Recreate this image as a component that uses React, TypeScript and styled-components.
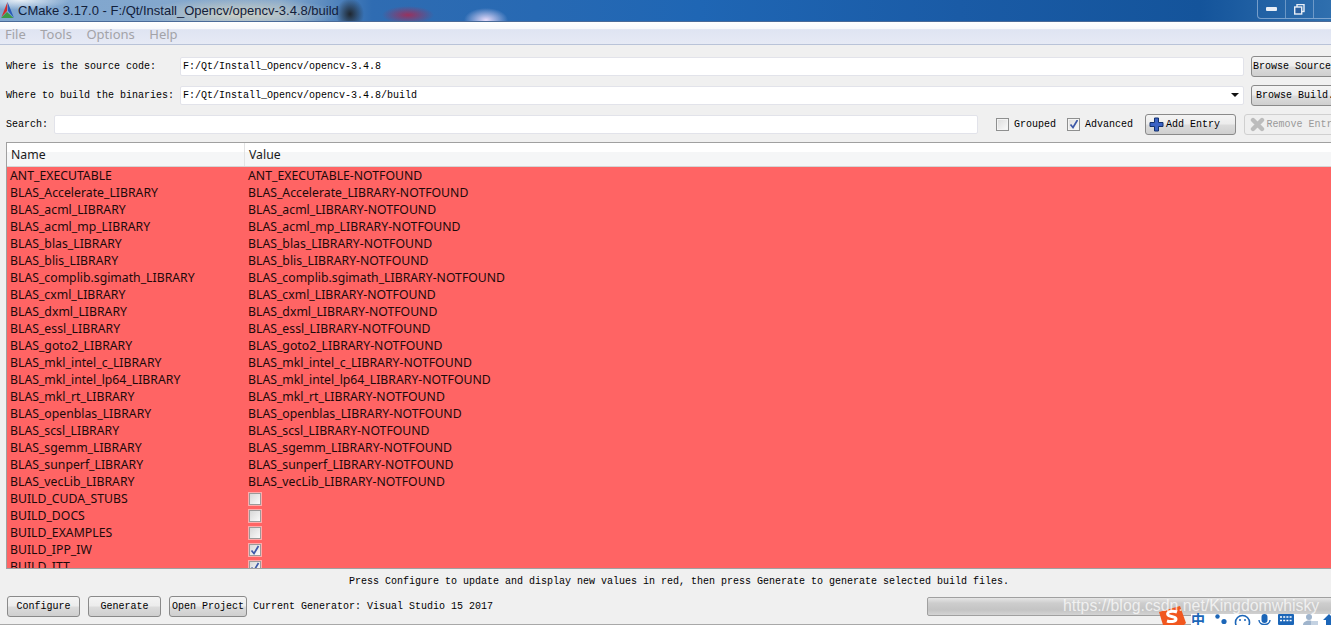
import React from "react";
import styled, { createGlobalStyle } from "styled-components";

const GlobalStyle = createGlobalStyle`
  html, body {
    margin: 0;
    padding: 0;
    width: 1331px;
    height: 625px;
    overflow: hidden;
    background: #f0f0f0;
  }
  svg {
    display: block;
    flex: none;
  }
`;

const Clip = styled.div`
  position: relative;
  width: 1331px;
  height: 625px;
  overflow: hidden;
`;

const Win = styled.div`
  display: flex;
  flex-direction: column;
  width: 1358px;
  height: 625px;
  background: #f0f0f0;
  font-family: "Liberation Mono", "DejaVu Sans Mono", monospace;
  font-size: 10px;
  color: #000;
  border-bottom: 1px solid #a8a8a8;
  box-sizing: border-box;
`;

const TitleBar = styled.div`
  position: relative;
  display: flex;
  align-items: center;
  gap: 4px;
  height: 21px;
  flex: none;
  padding-left: 1px;
  font-family: "Liberation Sans", Arial, sans-serif;
  font-size: 13px;
  color: #12203a;
  border-bottom: 1px solid #4a6a98;
  background:
    radial-gradient(ellipse 22px 12px at 486px 20px, rgba(240, 225, 255, 0.95), transparent),
    radial-gradient(ellipse 26px 9px at 408px 15px, rgba(170, 40, 80, 0.85), transparent),
    radial-gradient(ellipse 14px 16px at 350px 14px, rgba(25, 25, 25, 0.85), transparent),
    radial-gradient(ellipse 100px 16px at 240px 14px, rgba(225, 220, 195, 0.8), transparent),
    radial-gradient(ellipse 50px 10px at 20px 0, rgba(245, 248, 250, 0.9), transparent),
    linear-gradient(90deg, #7fa6cf 0, #86a8cc 280px, #2f6cb2 372px, #1f66b4 700px, #1a5ba6 960px, #14549b 1200px, #2f6fae 1331px);
`;

const WinControls = styled.div`
  position: absolute;
  top: 0;
  left: 1257px;
  display: flex;
  height: 18px;
  border: 1px solid rgba(190, 210, 235, 0.55);
  border-top: 0;
  border-radius: 0 0 4px 4px;
`;

const WinBtn = styled.div`
  display: flex;
  align-items: center;
  justify-content: center;
  width: ${(p: { $w: number }) => p.$w}px;
  border-right: 1px solid rgba(190, 210, 235, 0.45);
`;

const MenuBar = styled.div`
  display: flex;
  gap: 14.5px;
  height: 23px;
  flex: none;
  align-items: flex-end;
  padding: 0 0 1px 5px;
  box-sizing: border-box;
  font-family: "Noto Sans", "Liberation Sans", sans-serif;
  font-size: 13px;
  line-height: 18px;
  color: #a3a3a8;
  border-bottom: 1px solid #b9c3d8;
  background: linear-gradient(180deg, #ffffff 0, #f8f9fc 30%, #dfe4f2 35%, #e6eaf5 100%);
`;

const Form = styled.div`
  display: flex;
  flex-direction: column;
  padding: 10px 0 0 6px;
  flex: none;
  height: 97px;
  box-sizing: border-box;
`;

const Row = styled.div`
  display: flex;
  align-items: center;
  height: 22px;
  margin-bottom: ${(p: { $gap: number }) => p.$gap}px;
`;

const Label = styled.span`
  width: 174px;
  flex: none;
  white-space: pre;
`;

const SearchLabel = styled.span`
  width: 48px;
  flex: none;
`;

const Field = styled.div`
  display: flex;
  align-items: center;
  justify-content: space-between;
  height: 19px;
  width: ${(p: { $w: number }) => p.$w}px;
  flex: none;
  box-sizing: border-box;
  padding: 0 4px 0 2px;
  background: #fff;
  border: 1px solid #e2e3ea;
  border-radius: 2px;
`;

const Button = styled.div<{ $w: number; $off?: boolean; $ml?: number; $left?: boolean }>`
  display: flex;
  align-items: center;
  justify-content: ${(p) => (p.$left ? "flex-start" : "center")};
  gap: 2px;
  flex: none;
  width: ${(p) => p.$w}px;
  height: 21px;
  margin-left: ${(p) => p.$ml ?? 0}px;
  padding-left: ${(p) => (p.$left ? 3 : 0)}px;
  box-sizing: border-box;
  white-space: pre;
  border: 1px solid ${(p) => (p.$off ? "#d0d0d0" : "#8a8a8a")};
  border-radius: 3px;
  color: ${(p) => (p.$off ? "#9a9a9a" : "#000")};
  background: ${(p) =>
    p.$off
      ? "#efefef"
      : "linear-gradient(180deg, #f4f4f4 0, #ececec 48%, #dcdcdc 52%, #cfcfcf 100%)"};
`;

const Check = styled.span<{ $ml: number }>`
  display: flex;
  align-items: center;
  gap: 5px;
  margin-left: ${(p) => p.$ml}px;
  flex: none;
`;

const Box = styled.span`
  display: flex;
  align-items: center;
  justify-content: center;
  width: 13px;
  height: 13px;
  box-sizing: border-box;
  border: 1px solid #8e8f8f;
  outline: 1px solid #f4f4f4;
  outline-offset: -2px;
  background: linear-gradient(135deg, #dcdcdc, #fbfbfb);
`;

const Table = styled.div`
  display: flex;
  flex-direction: column;
  flex: none;
  height: 427px;
  margin-left: 6px;
  overflow: hidden;
  border-top: 1px solid #a0a0a0;
  border-left: 1px solid #a0a0a0;
  border-bottom: 1px solid #a0a0a0;
  box-sizing: border-box;
  font-family: "Noto Sans", "Liberation Sans", sans-serif;
  font-size: 12.25px;
`;

const Head = styled.div`
  display: flex;
  flex: none;
  height: 24px;
  align-items: flex-start;
  color: #1a1a1a;
  box-sizing: border-box;
  border-bottom: 1px solid #d5d5d5;
  background: linear-gradient(180deg, #fff 0, #fff 40%, #f5f6f7 41%, #f5f6f7 100%);
`;

const HeadCell = styled.div<{ $w?: number }>`
  display: flex;
  align-items: center;
  height: 23px;
  box-sizing: border-box;
  width: ${(p) => (p.$w ? `${p.$w}px` : "auto")};
  padding-left: 4px;
  border-right: ${(p) => (p.$w ? "1px solid #e2e3e4" : "0")};
`;

const Rows = styled.div`
  flex: 1;
  overflow: hidden;
  background: #ff6464;
`;

const Item = styled.div`
  display: flex;
  align-items: center;
  height: 17px;
  box-sizing: border-box;
  color: #1c0a0a;
  white-space: pre;
`;

const NameCell = styled.div`
  width: 238px;
  flex: none;
  padding-left: 3px;
`;

const Tick = styled.span`
  display: flex;
  align-items: center;
  justify-content: center;
  width: 12px;
  height: 12px;
  box-sizing: border-box;
  margin-left: 1px;
  border: 1px solid #9a9a9a;
  background: linear-gradient(135deg, #d8d8d8, #fafafa);
  box-shadow: 0 0 0 1px rgba(255, 255, 255, 0.45);
`;

const Hint = styled.div`
  flex: none;
  height: 24px;
  display: flex;
  align-items: center;
  justify-content: center;
`;

const Bottom = styled.div`
  display: flex;
  align-items: center;
  flex: 1;
  padding: 0 0 4px 7px;
`;

const GenText = styled.span`
  margin-left: 6px;
  width: 674px;
  flex: none;
  white-space: pre;
`;

const Progress = styled.div`
  width: 420px;
  height: 19px;
  box-sizing: border-box;
  flex: none;
  border: 1px solid #a0a0a0;
  border-radius: 2px;
  background: linear-gradient(180deg, #e6e6e6 0, #cdcdcd 30%, #c4c4c4 70%, #d4d4d4 100%);
`;

const Watermark = styled.div`
  position: absolute;
  left: 1063px;
  top: 597px;
  font-family: "Liberation Sans", Arial, sans-serif;
  font-size: 15.85px;
  color: rgba(255, 255, 255, 0.72);
  white-space: pre;
`;

const Ime = styled.div`
  position: absolute;
  left: 1158px;
  top: 606px;
  display: flex;
  align-items: flex-start;
  height: 19px;
  overflow: hidden;
`;

const ImeIcons = styled.div`
  display: flex;
  align-items: flex-start;
  height: 11px;
  margin-top: 8px;
  background: #fff;
`;

const ImeSlot = styled.span<{ $w: number }>`
  display: block;
  flex: none;
  width: ${(p) => p.$w}px;
`;

const ImeChar = styled.span`
  display: block;
  margin-top: -3px;
  font-family: "Noto Sans CJK SC", sans-serif;
  font-size: 14px;
  line-height: 17px;
  font-weight: 700;
  color: #1c66b8;
`;

const SogouSlot = styled.span`
  display: block;
  flex: none;
  width: 33px;
`;

const names: [string, string][] = [
  ["ANT_EXECUTABLE", "ANT_EXECUTABLE-NOTFOUND"],
  ["BLAS_Accelerate_LIBRARY", "BLAS_Accelerate_LIBRARY-NOTFOUND"],
  ["BLAS_acml_LIBRARY", "BLAS_acml_LIBRARY-NOTFOUND"],
  ["BLAS_acml_mp_LIBRARY", "BLAS_acml_mp_LIBRARY-NOTFOUND"],
  ["BLAS_blas_LIBRARY", "BLAS_blas_LIBRARY-NOTFOUND"],
  ["BLAS_blis_LIBRARY", "BLAS_blis_LIBRARY-NOTFOUND"],
  ["BLAS_complib.sgimath_LIBRARY", "BLAS_complib.sgimath_LIBRARY-NOTFOUND"],
  ["BLAS_cxml_LIBRARY", "BLAS_cxml_LIBRARY-NOTFOUND"],
  ["BLAS_dxml_LIBRARY", "BLAS_dxml_LIBRARY-NOTFOUND"],
  ["BLAS_essl_LIBRARY", "BLAS_essl_LIBRARY-NOTFOUND"],
  ["BLAS_goto2_LIBRARY", "BLAS_goto2_LIBRARY-NOTFOUND"],
  ["BLAS_mkl_intel_c_LIBRARY", "BLAS_mkl_intel_c_LIBRARY-NOTFOUND"],
  ["BLAS_mkl_intel_lp64_LIBRARY", "BLAS_mkl_intel_lp64_LIBRARY-NOTFOUND"],
  ["BLAS_mkl_rt_LIBRARY", "BLAS_mkl_rt_LIBRARY-NOTFOUND"],
  ["BLAS_openblas_LIBRARY", "BLAS_openblas_LIBRARY-NOTFOUND"],
  ["BLAS_scsl_LIBRARY", "BLAS_scsl_LIBRARY-NOTFOUND"],
  ["BLAS_sgemm_LIBRARY", "BLAS_sgemm_LIBRARY-NOTFOUND"],
  ["BLAS_sunperf_LIBRARY", "BLAS_sunperf_LIBRARY-NOTFOUND"],
  ["BLAS_vecLib_LIBRARY", "BLAS_vecLib_LIBRARY-NOTFOUND"],
];

const flags: [string, boolean][] = [
  ["BUILD_CUDA_STUBS", false],
  ["BUILD_DOCS", false],
  ["BUILD_EXAMPLES", false],
  ["BUILD_IPP_IW", true],
  ["BUILD_ITT", true],
];

const CheckMark = () => (
  <svg width="10" height="10" viewBox="0 0 10 10">
    <path d="M1.5 5.5 L4 8.5 L8.5 1" fill="none" stroke="#3d58a8" strokeWidth="1.7" />
  </svg>
);

const CMakeLogo = () => (
  <svg width="13" height="17" viewBox="0 0 13 17">
    <polygon points="6.5,0 0.5,15 6,9" fill="#d42a2a" />
    <polygon points="6.5,0 13,16 7,9" fill="#2a5bb8" />
    <polygon points="0,16 12.5,16 6,10" fill="#3c9a48" />
  </svg>
);

const PlusIcon = () => (
  <svg width="15" height="15" viewBox="0 0 15 15">
    <path
      d="M5.5 1 H9.5 V5.5 H14 V9.5 H9.5 V14 H5.5 V9.5 H1 V5.5 H5.5 Z"
      fill="#3b62c4"
      stroke="#12306e"
      strokeWidth="1"
    />
  </svg>
);

const RemoveIcon = () => (
  <svg width="15" height="15" viewBox="0 0 15 15">
    <path d="M3 3 L12 12 M12 3 L3 12" stroke="#bcbcbc" strokeWidth="4.4" strokeLinecap="round" />
  </svg>
);

const ComboArrow = () => (
  <svg width="8" height="4" viewBox="0 0 8 4">
    <polygon points="0,0 8,0 4,4" fill="#111" />
  </svg>
);

const SogouLogo = () => (
  <svg width="28" height="19" viewBox="0 0 28 19">
    <path d="M1 6 L22 0 L28 17 L26 19 H5 Z" fill="#f1571f" />
    <path
      d="M19 6 C14 4 8 6 10 9 C11 11 18 10 18 13 C18 16 12 16 9 15"
      fill="none"
      stroke="#fff"
      strokeWidth="3"
    />
  </svg>
);

const Dots = () => (
  <svg width="12" height="11" viewBox="0 0 12 11">
    <circle cx="2.5" cy="2.5" r="2.2" fill="#1c66b8" />
    <circle cx="9" cy="7.5" r="2.6" fill="#1c66b8" />
  </svg>
);

const Smile = () => (
  <svg width="17" height="11" viewBox="0 0 17 11">
    <circle cx="8.5" cy="8.5" r="7" fill="#fff" stroke="#1c66b8" strokeWidth="1.6" />
    <circle cx="6" cy="6" r="1" fill="#1c66b8" />
    <circle cx="11" cy="6" r="1" fill="#1c66b8" />
  </svg>
);

const Mic = () => (
  <svg width="13" height="11" viewBox="0 0 13 11">
    <rect x="3.5" y="0" width="6" height="9" rx="3" fill="#1c66b8" />
    <path d="M1 6 C1 12 12 12 12 6" fill="none" stroke="#1c66b8" strokeWidth="1.4" />
  </svg>
);

const Keyboard = () => (
  <svg width="16" height="11" viewBox="0 0 16 11">
    <rect x="0" y="0" width="16" height="11" rx="1" fill="#1c66b8" />
    <path d="M2 3 H14 M2 6.5 H14" stroke="#fff" strokeWidth="1.5" strokeDasharray="2 1.2" />
  </svg>
);

const Person = () => (
  <svg width="16" height="11" viewBox="0 0 16 11">
    <circle cx="7" cy="3" r="3" fill="#9fb4cc" />
    <path d="M1 11 C1 5 13 5 13 11 Z" fill="#9fb4cc" />
    <rect x="9" y="7" width="7" height="4" fill="#c4d2e2" />
  </svg>
);

const Up = () => (
  <svg width="12" height="11" viewBox="0 0 12 11">
    <path d="M6 0 L12 6 H9 V11 H3 V6 H0 Z" fill="#1c66b8" />
  </svg>
);

export default function App() {
  return (
    <Clip>
      <GlobalStyle />
      <Win>
        <TitleBar>
          <CMakeLogo />
          <span>CMake 3.17.0 - F:/Qt/Install_Opencv/opencv-3.4.8/build</span>
          <WinControls>
            <WinBtn $w={27}>
              <svg width="11" height="4" viewBox="0 0 11 4">
                <rect width="11" height="4" rx="1" fill="#e8eef6" />
              </svg>
            </WinBtn>
            <WinBtn $w={27}>
              <svg width="11" height="11" viewBox="0 0 11 11">
                <rect x="3" y="0.5" width="7" height="7" fill="none" stroke="#e8eef6" strokeWidth="1.4" />
                <rect x="0.7" y="3" width="7" height="7" fill="#2a5f9f" stroke="#e8eef6" strokeWidth="1.4" />
              </svg>
            </WinBtn>
            <WinBtn $w={30} />
          </WinControls>
        </TitleBar>
        <MenuBar>
          <span>File</span>
          <span>Tools</span>
          <span>Options</span>
          <span>Help</span>
        </MenuBar>
        <Form>
          <Row $gap={7}>
            <Label>Where is the source code:</Label>
            <Field $w={1064}>F:/Qt/Install_Opencv/opencv-3.4.8</Field>
            <Button $w={100} $ml={7}>Browse Source...</Button>
          </Row>
          <Row $gap={7}>
            <Label>Where to build the binaries:</Label>
            <Field $w={1064}>
              F:/Qt/Install_Opencv/opencv-3.4.8/build
              <ComboArrow />
            </Field>
            <Button $w={100} $ml={7}>Browse Build...</Button>
          </Row>
          <Row $gap={0}>
            <SearchLabel>Search:</SearchLabel>
            <Field $w={924} />
            <Check $ml={18}>
              <Box />
              Grouped
            </Check>
            <Check $ml={11}>
              <Box>
                <CheckMark />
              </Box>
              Advanced
            </Check>
            <Button $w={91} $ml={12} $left>
              <PlusIcon />
              Add Entry
            </Button>
            <Button $w={100} $ml={8} $off>
              <RemoveIcon />
              Remove Entry
            </Button>
          </Row>
        </Form>
        <Table>
          <Head>
            <HeadCell $w={238}>Name</HeadCell>
            <HeadCell>Value</HeadCell>
          </Head>
          <Rows>
            {names.map(([n, v]) => (
              <Item key={n}>
                <NameCell>{n}</NameCell>
                <span>{v}</span>
              </Item>
            ))}
            {flags.map(([n, on]) => (
              <Item key={n}>
                <NameCell>{n}</NameCell>
                <Tick>{on && <CheckMark />}</Tick>
              </Item>
            ))}
          </Rows>
        </Table>
        <Hint>Press Configure to update and display new values in red, then press Generate to generate selected build files.</Hint>
        <Bottom>
          <Button $w={73}>Configure</Button>
          <Button $w={73} $ml={8}>Generate</Button>
          <Button $w={78} $ml={8}>Open Project</Button>
          <GenText>Current Generator: Visual Studio 15 2017</GenText>
          <Progress />
        </Bottom>
      </Win>
      <Ime>
        <SogouSlot>
          <SogouLogo />
        </SogouSlot>
        <ImeIcons>
          <ImeSlot $w={24}>
            <ImeChar>中</ImeChar>
          </ImeSlot>
          <ImeSlot $w={19}>
            <Dots />
          </ImeSlot>
          <ImeSlot $w={24}>
            <Smile />
          </ImeSlot>
          <ImeSlot $w={20}>
            <Mic />
          </ImeSlot>
          <ImeSlot $w={24}>
            <Keyboard />
          </ImeSlot>
          <ImeSlot $w={21}>
            <Person />
          </ImeSlot>
          <ImeSlot $w={12}>
            <Up />
          </ImeSlot>
        </ImeIcons>
      </Ime>
      <Watermark>https://blog.csdn.net/Kingdomwhisky</Watermark>
    </Clip>
  );
}
